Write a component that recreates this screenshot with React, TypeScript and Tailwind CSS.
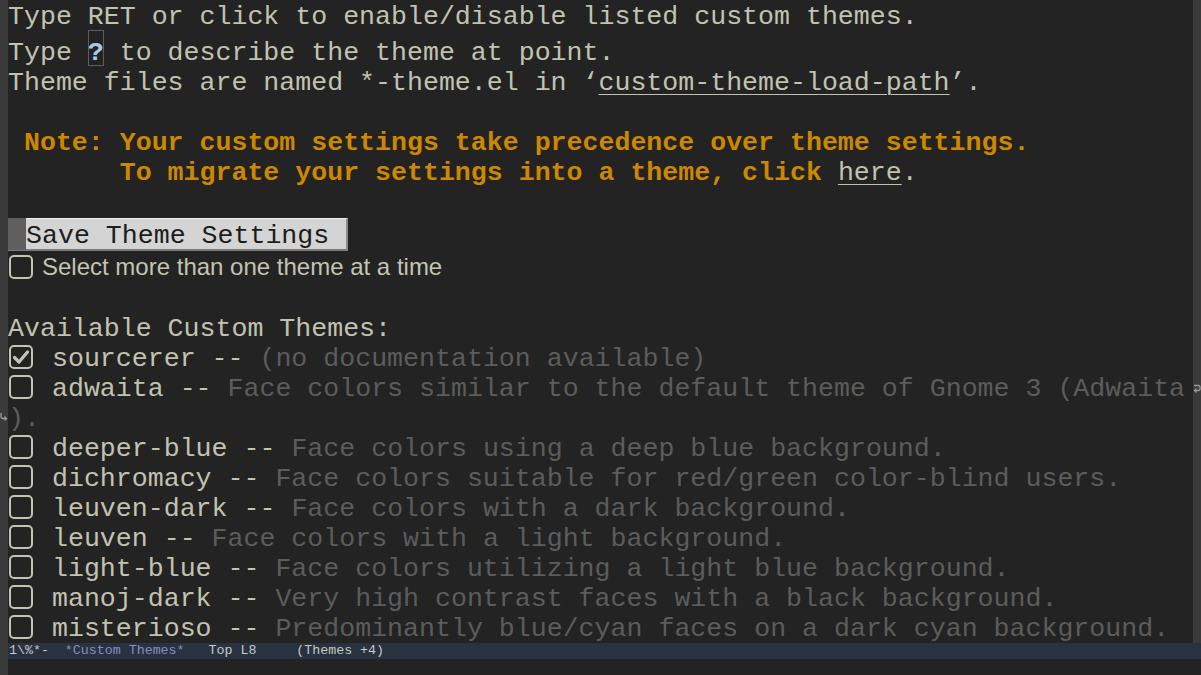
import React from 'react';

const mono = { fontFamily: '"Liberation Mono", "Courier New", monospace' };

const themes = [
  { name: 'sourcerer', doc: '(no documentation available)', on: true },
  { name: 'adwaita', doc: 'Face colors similar to the default theme of Gnome 3 (Adwaita', wrap: ').' },
  { name: 'deeper-blue', doc: 'Face colors using a deep blue background.' },
  { name: 'dichromacy', doc: 'Face colors suitable for red/green color-blind users.' },
  { name: 'leuven-dark', doc: 'Face colors with a dark background.' },
  { name: 'leuven', doc: 'Face colors with a light background.' },
  { name: 'light-blue', doc: 'Face colors utilizing a light blue background.' },
  { name: 'manoj-dark', doc: 'Very high contrast faces with a black background.' },
  { name: 'misterioso', doc: 'Predominantly blue/cyan faces on a dark cyan background.' },
];

function Checkbox({ on }: { on?: boolean }) {
  return (
    <svg width="24" height="24" viewBox="0 0 24 24" className="ml-[1px] shrink-0">
      <rect x="1" y="1" width="22" height="22" rx="4" fill="none" stroke="#c4c4b2" strokeWidth="2" />
      {on && <path d="M5.5 12.5 L10 17 L18.5 7" fill="none" stroke="#c4c4b2" strokeWidth="3.2" strokeLinecap="round" strokeLinejoin="round" />}
    </svg>
  );
}

function WrapRight() {
  return (
    <svg width="8" height="10" viewBox="0 0 8 10" className="mt-[12px]">
      <path d="M1 1.5 H5.5 Q7 1.5 7 3 V5 Q7 6.5 5.5 6.5 H2.5" fill="none" stroke="#9a9a9a" strokeWidth="1.3" />
      <path d="M3.5 4.5 L1.5 6.5 L3.5 8.5" fill="none" stroke="#9a9a9a" strokeWidth="1.3" />
    </svg>
  );
}

function WrapLeft() {
  return (
    <svg width="8" height="10" viewBox="0 0 8 10" className="mt-[10px]">
      <path d="M1 1 V4.5 Q1 6.5 3 6.5 H6" fill="none" stroke="#9a9a9a" strokeWidth="1.3" />
      <path d="M4.5 4.5 L6.5 6.5 L4.5 8.5" fill="none" stroke="#9a9a9a" strokeWidth="1.3" />
    </svg>
  );
}

function Line({
  h = 'h-[30px]',
  align = 'items-start pt-[2px]',
  left,
  right,
  children,
}: {
  h?: string;
  align?: string;
  left?: React.ReactNode;
  right?: React.ReactNode;
  children?: React.ReactNode;
}) {
  return (
    <div className={`flex ${h}`}>
      <div className="w-[8px] bg-[#3a3a3a] flex justify-center items-start shrink-0">{left}</div>
      <div className={`flex-1 flex ${align} whitespace-pre`}>{children}</div>
      <div className="w-[8px] bg-[#3a3a3a] flex justify-center items-start shrink-0">{right}</div>
    </div>
  );
}

export default function App() {
  return (
    <div className="w-[1201px] h-[675px] bg-[#232323] text-[#c2c2b0] text-[26.6px] leading-[30px] overflow-hidden flex flex-col" style={mono}>
      <Line>
        <span>Type RET or click to enable/disable listed custom themes.</span>
      </Line>
      <Line h="h-[36px]" align="items-start pt-[8px]">
        <span>Type </span>
        <span className="h-[36px] -mt-[8px] pt-[8px] outline outline-1 outline-[#5e5e5e] -outline-offset-1 font-bold text-[#a2cdec]">?</span>
        <span> to describe the theme at point.</span>
      </Line>
      <Line>
        <span>Theme files are named *-theme.el in ‘</span>
        <span className="underline underline-offset-[4px] decoration-1">custom-theme-load-path</span>
        <span>’.</span>
      </Line>
      <Line />
      <Line>
        <span className="font-bold text-[#cc8800]"> Note: Your custom settings take precedence over theme settings.</span>
      </Line>
      <Line>
        <span className="font-bold text-[#cc8800]">       To migrate your settings into a theme, click </span>
        <span className="underline underline-offset-[4px] decoration-1">here</span>
        <span>.</span>
      </Line>
      <Line />
      <Line h="h-[36px]" align="items-start pt-[2px]">
        <div className="h-[33px] w-[340px] flex items-start bg-[#d4d4d4] text-[#1c1c1c] border-t border-t-[#eeeeee] border-b-2 border-b-[#7a7a7a] border-r-2 border-r-[#8a8a8a]">
          <span className="w-[18px] -mt-[1px] h-[32px] bg-[#5f5f5f]" />
          <span className="pt-[2px]">Save Theme Settings</span>
        </div>
      </Line>
      <Line align="items-center">
        <Checkbox />
        <span className="ml-[9px] text-[24px] leading-[30px] text-[#c4c4b2]" style={{ fontFamily: '"Liberation Sans", Arial, sans-serif' }}>
          Select more than one theme at a time
        </span>
      </Line>
      <Line />
      <Line>
        <span>Available Custom Themes:</span>
      </Line>
      {themes.map((t) => (
        <React.Fragment key={t.name}>
          <Line right={t.wrap ? <WrapRight /> : undefined}>
            <div className="h-[26px] w-[28px] flex items-center shrink-0">
              <Checkbox on={t.on} />
            </div>
            <span> {t.name} -- </span>
            <span className="text-[#5c5c5c]">{t.doc}</span>
          </Line>
          {t.wrap && (
            <Line left={<WrapLeft />}>
              <span className="text-[#5c5c5c]">{t.wrap}</span>
            </Line>
          )}
        </React.Fragment>
      ))}
      <div className="flex h-[1px]">
        <div className="w-[8px] bg-[#3a3a3a]" />
        <div className="flex-1" />
        <div className="w-[8px] bg-[#3a3a3a]" />
      </div>
      <div className="flex h-[16px]">
        <div className="w-[8px] bg-[#3a3a3a]" />
        <div className="flex-1 bg-[#29333f] text-[13.3px] leading-[16px] whitespace-pre text-[#c8c8c8] pl-[1px]">
          <span>1\%*-  </span>
          <span className="text-[#8a8ac4]">*Custom Themes*</span>
          <span>   Top L8     (Themes +4)</span>
        </div>
      </div>
      <div className="flex flex-1">
        <div className="w-[8px] bg-[#3a3a3a]" />
        <div className="flex-1" />
      </div>
    </div>
  );
}
